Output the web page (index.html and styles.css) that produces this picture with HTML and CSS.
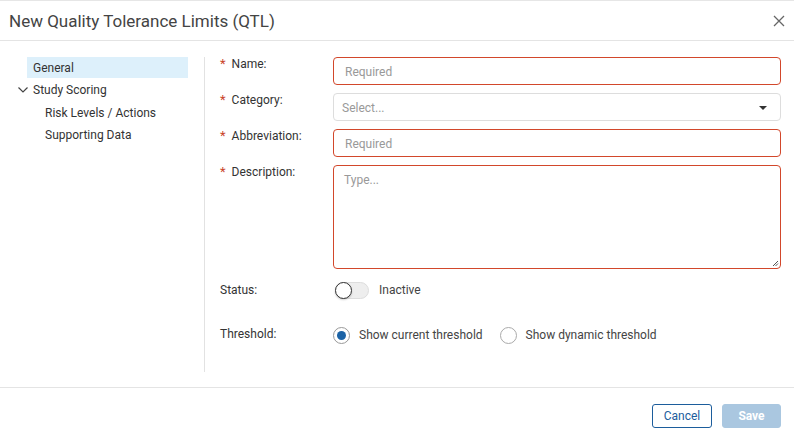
FILE: index.html
```html
<!DOCTYPE html>
<html>
<head>
<meta charset="utf-8">
<link rel="stylesheet" href="styles.css">
</head>
<body>
<div class="dialog">
  <div class="header">
    <div class="title">New Quality Tolerance Limits (QTL)</div>
    <svg class="close" width="12" height="12" viewBox="0 0 12 12"><path d="M1 1L11 11M11 1L1 11" stroke="#666" stroke-width="1.3" fill="none"/></svg>
  </div>
  <div class="body">
    <div class="nav">
      <div class="nav-item active">General</div>
      <div class="nav-item group"><svg class="chev" width="10" height="6" viewBox="0 0 10 6"><path d="M0.5 0.5L5 5L9.5 0.5" stroke="#444" stroke-width="1.2" fill="none"/></svg>Study Scoring</div>
      <div class="nav-item sub first">Risk Levels / Actions</div>
      <div class="nav-item sub">Supporting Data</div>
    </div>
    <div class="form">
      <div class="row">
        <div class="label"><span class="req">*</span>Name:</div>
        <div class="input error">Required</div>
      </div>
      <div class="row">
        <div class="label"><span class="req">*</span>Category:</div>
        <div class="input select">Select...<span class="caret"></span></div>
      </div>
      <div class="row">
        <div class="label"><span class="req">*</span>Abbreviation:</div>
        <div class="input error">Required</div>
      </div>
      <div class="row">
        <div class="label"><span class="req">*</span>Description:</div>
        <div class="input error textarea">Type...
          <svg class="grip" width="7" height="7" viewBox="0 0 7 7"><path d="M6 1L1 6M6 3.5L3.5 6" stroke="#555" stroke-width="1" fill="none"/></svg>
        </div>
      </div>
      <div class="row status">
        <div class="label plain">Status:</div>
        <div class="ctrl"><span class="toggle"><span class="knob"></span></span><span class="ctext">Inactive</span></div>
      </div>
      <div class="row threshold">
        <div class="label plain">Threshold:</div>
        <div class="ctrl">
          <span class="radio on"><span class="dot"></span></span><span class="ctext">Show current threshold</span>
          <span class="radio second"></span><span class="ctext">Show dynamic threshold</span>
        </div>
      </div>
    </div>
  </div>
  <div class="footer">
    <button class="btn cancel">Cancel</button>
    <button class="btn save">Save</button>
  </div>
</div>
</body>
</html>
```

FILE: styles.css
```css
* { box-sizing: border-box; }
html, body { margin: 0; padding: 0; background: #fff; }
body { font-family: Roboto, "Liberation Sans", sans-serif; color: #333; font-size: 12px; }
.dialog { width: 794px; height: 444px; border-top: 1px solid #e6e6e6; display: flex; flex-direction: column; }
.header { height: 40px; border-bottom: 1px solid #e4e4e4; display: flex; align-items: center; justify-content: space-between; padding: 0 9px 0 9px; }
.title { font-size: 17px; color: #444; padding-top: 1px; }
.close { margin-right: 0; margin-top: 1px; }
.body { display: flex; height: 346px; padding-top: 16px; }
.nav { width: 205px; padding-left: 17px; padding-right: 16px; border-right: 1px solid #e2e2e2; height: 315px; }
.nav-item { height: 22px; line-height: 22px; padding-left: 16px; color: #333; font-size: 12px; display: flex; align-items: center; }
.nav-item.active { margin-left: 10px; padding-left: 6px; background: #ddf0fb; height: 21px; }
.nav-item.group { padding-left: 1px; margin-top: 1px; }
.chev { margin-right: 5px; }
.nav-item.sub { padding-left: 28px; height: 22px; }
.nav-item.sub.first { margin-top: 1px; }
.form { flex: 1; padding-left: 15px; padding-right: 13px; }
.row { display: flex; margin-bottom: 8px; }
.label { width: 113px; font-size: 12px; color: #333; padding-top: 0; line-height: 13px; }
.req { color: #c9442a; margin-right: 6px; font-size: 13px; }
.label.plain { padding-left: 0; }
.input { flex: 1; height: 28px; border: 1px solid #ddd; border-radius: 4px; font-size: 12px; color: #999; padding: 7px 11px; position: relative; }
.input.error { border-color: #d2472b; }
.input.select { padding-left: 8px; }
.caret { position: absolute; right: 13px; top: 12px; width: 0; height: 0; border-left: 4px solid transparent; border-right: 4px solid transparent; border-top: 4px solid #333; }
.textarea { height: 104px; padding: 7px 10px; }
.grip { position: absolute; right: 1px; bottom: 1px; }
.row.status { margin-top: 3px; height: 30px; }
.row.status .label { padding-top: 7px; }
.ctrl { display: flex; align-items: center; height: 26px; }
.toggle { width: 34px; height: 17px; border-radius: 9px; background: #eee; border: 1px solid #ddd; position: relative; margin-left: 2px; margin-right: 10px; }
.knob { position: absolute; left: -1px; top: -1px; width: 17px; height: 17px; border-radius: 50%; background: #fff; border: 1.5px solid #333; box-shadow: 0 1px 2px rgba(0,0,0,0.2); }
.ctext { font-size: 12px; color: #444; }
.row.threshold { margin-top: 15px; }
.row.threshold .label { padding-top: 6px; }
.radio { width: 17px; height: 17px; border-radius: 50%; border: 1px solid #aaa; margin-right: 9px; display: inline-flex; align-items: center; justify-content: center; }
.radio.on { border-color: #999; }
.dot { width: 9px; height: 9px; border-radius: 50%; background: #1c63a6; }
.radio.second { margin-left: 17px; margin-right: 9px; }
.footer { border-top: 1px solid #e4e4e4; flex: 1; display: flex; justify-content: flex-end; align-items: flex-start; padding: 16px 13px 0 0; gap: 10px; }
.btn { font-family: Roboto, "Liberation Sans", sans-serif; font-size: 12px; height: 24px; border-radius: 3px; padding: 0; }
.cancel { width: 60px; background: #fff; border: 1px solid #1c5d9c; color: #1c5d9c; }
.save { width: 59px; background: #aac7e0; border: 1px solid #aac7e0; color: #fff; font-weight: bold; }
```
